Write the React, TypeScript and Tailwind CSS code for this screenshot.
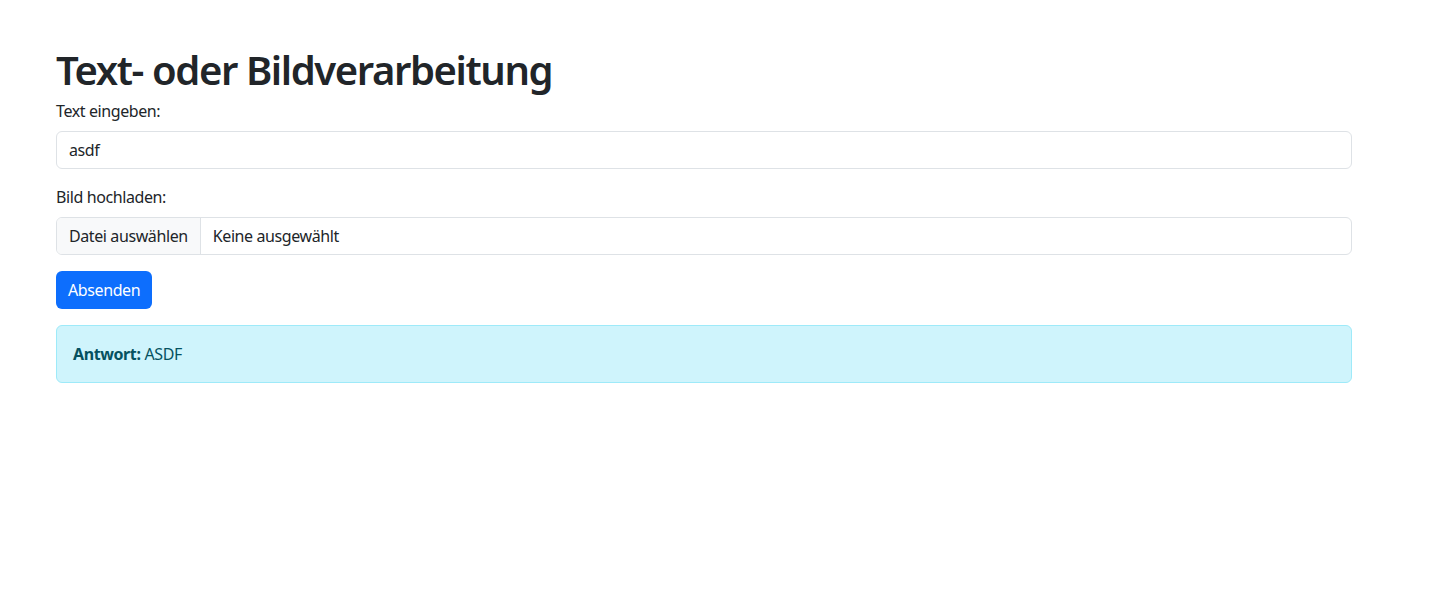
export default function App() {
  return (
    <div className="min-h-[609px] bg-white text-[#212529] pt-[46px] tracking-[-0.4px]" style={{ fontFamily: '"Noto Sans", "Open Sans", sans-serif' }}>
      <div className="ml-[56px] w-[1296px]">
        <h1 className="text-[40px] font-semibold leading-[48px] mb-[5px] tracking-[-1.4px]">Text- oder Bildverarbeitung</h1>

        <label className="block text-[16px] leading-[24px] mb-[8px]">Text eingeben:</label>
        <input
          type="text"
          defaultValue="asdf"
          className="block w-full h-[38px] px-[12px] text-[16px] border border-[#dee2e6] rounded-[6px] outline-none mb-[16px]"
        />

        <label className="block text-[16px] leading-[24px] mb-[8px]">Bild hochladen:</label>
        <div className="flex h-[38px] w-full border border-[#dee2e6] rounded-[6px] overflow-hidden mb-[16px] text-[16px]">
          <div className="flex items-center px-[12px] bg-[#f8f9fa] border-r border-[#dee2e6]">Datei auswählen</div>
          <div className="flex items-center px-[12px]">Keine ausgewählt</div>
        </div>

        <button className="h-[38px] px-[12px] bg-[#0d6efd] text-white text-[16px] rounded-[6px] mb-[16px]">Absenden</button>

        <div className="h-[58px] flex items-center px-[16px] bg-[#cff4fc] border border-[#9eeaf9] rounded-[6px] text-[#055160] text-[16px]">
          <strong className="font-bold mr-[4px]">Antwort:</strong>ASDF
        </div>
      </div>
    </div>
  );
}
